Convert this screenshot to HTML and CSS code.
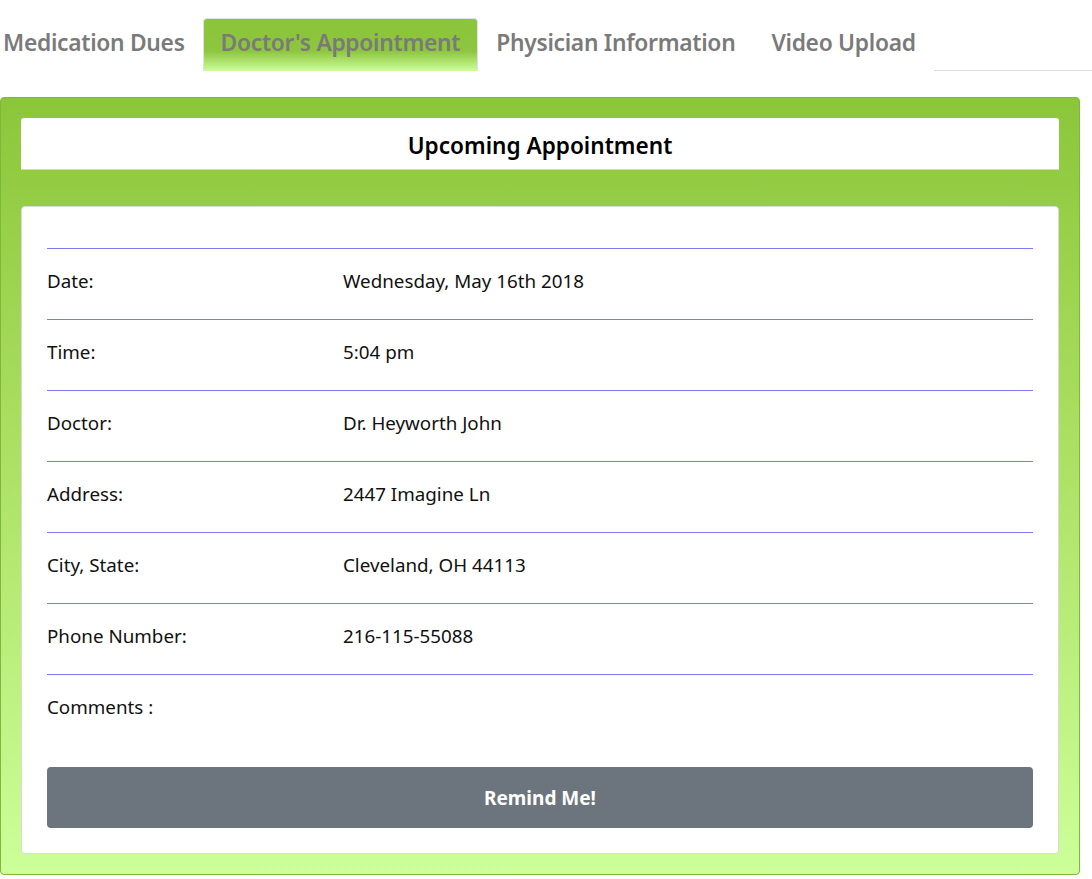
FILE: index.html
```html
<!DOCTYPE html>
<html lang="en">
<head>
<meta charset="utf-8">
<title>Doctor's Appointment</title>
<link rel="stylesheet" href="styles.css">
</head>
<body>
  <nav class="tabs">
    <a class="tab first">Medication Dues</a>
    <a class="tab active">Doctor's Appointment</a>
    <a class="tab">Physician Information</a>
    <a class="tab">Video Upload</a>
    <span class="tab-fill"></span>
  </nav>
  <section class="panel">
    <header class="panel-head">Upcoming Appointment</header>
    <div class="card">
      <div class="row"><span class="label">Date:</span><span class="value">Wednesday, May 16th 2018</span></div>
      <div class="row"><span class="label">Time:</span><span class="value">5:04 pm</span></div>
      <div class="row"><span class="label">Doctor:</span><span class="value">Dr. Heyworth John</span></div>
      <div class="row"><span class="label">Address:</span><span class="value">2447 Imagine Ln</span></div>
      <div class="row"><span class="label">City, State:</span><span class="value">Cleveland, OH 44113</span></div>
      <div class="row"><span class="label">Phone Number:</span><span class="value">216-115-55088</span></div>
      <div class="row comments"><span class="label">Comments :</span><span class="value"></span></div>
      <button class="remind">Remind Me!</button>
    </div>
  </section>
</body>
</html>
```
FILE: styles.css
```css
html, body {
  margin: 0;
  padding: 0;
  background: #ffffff;
}
body {
  font-family: "Noto Sans", "Open Sans", sans-serif;
  color: #111;
  width: 1092px;
}
.tabs {
  display: flex;
  align-items: stretch;
  padding-top: 18px;
  height: 53px;
}
.tab {
  display: flex;
  align-items: center;
  padding: 0 17px 6px;
  font-size: 22.8px;
  font-weight: 600;
  color: #7a7a7a;
  border: 1px solid transparent;
  border-bottom: none;
  letter-spacing: -0.3px;
}
.tab.first {
  padding-left: 2px;
}
.tab.active {
  background: linear-gradient(to bottom, #8bc53a 0%, #8dc63f 62%, #ccff99 100%);
  border-color: #dfe3e8;
  border-radius: 4px 4px 0 0;
}
.tab-fill {
  flex: 1;
  border-bottom: 1px solid #dcdcdc;
}
.panel {
  margin-top: 26px;
  width: 1038px;
  padding: 20px;
  border: 1px solid #7db83a;
  border-radius: 4px;
  background: linear-gradient(to bottom, #8bc63a 0%, #a8dd5e 40%, #ccff99 100%);
}
.panel-head {
  background: #fff;
  height: 52px;
  padding-top: 3px;
  box-sizing: border-box;
  border-bottom: 1px solid #d6d6d6;
  border-radius: 3px 3px 0 0;
  display: flex;
  align-items: center;
  justify-content: center;
  font-size: 22.6px;
  font-weight: 600;
  color: #000;
}
.card {
  margin-top: 36px;
  background: #fff;
  border: 1px solid #d9d9d9;
  border-radius: 4px;
  padding: 41px 25px 25px;
}
.row {
  display: grid;
  grid-template-columns: 296px 1fr;
  border-top: 1px solid #7b7bef;
  padding: 19px 0 24px;
  line-height: 27px;
  font-size: 18.8px;
  color: #111;
}
.row.comments {
  padding-bottom: 46px;
}
.remind {
  display: block;
  width: 100%;
  height: 61px;
  border: none;
  border-radius: 4px;
  background: #6c757d;
  color: #fff;
  font-family: inherit;
  font-size: 19px;
  font-weight: 700;
}
```
